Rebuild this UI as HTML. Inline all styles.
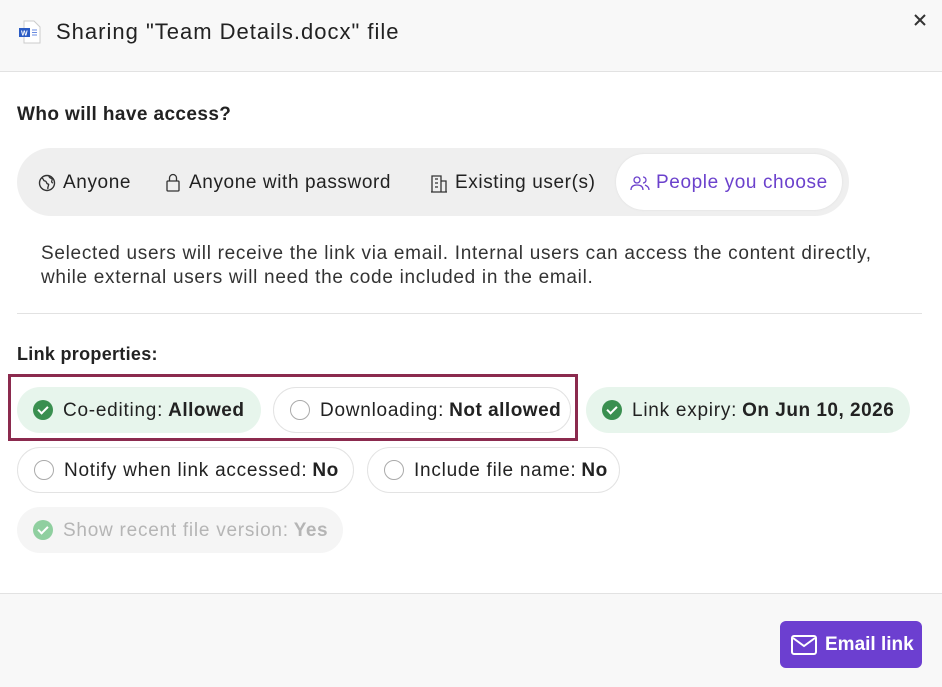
<!DOCTYPE html><html><head><style>
body{margin:0;width:942px;height:686px;font-family:"Liberation Sans",sans-serif;color:#222;background:#fff;position:relative;overflow:hidden}
.a{position:absolute}
.pill{position:absolute;height:46px;border-radius:24px;display:flex;align-items:center;font-size:19px;letter-spacing:0.75px;box-sizing:border-box;padding-left:16px;padding-top:2px;white-space:nowrap}
.pill b{margin-left:5px;letter-spacing:0.5px}
.c{width:20px;height:20px;border-radius:50%;box-sizing:border-box;margin-right:10px;flex:none;position:relative;margin-top:-2px}
.o{border:1.5px solid #aaa}
.ob{border:1px solid #e3e3e3;background:#fff}
.g{background:#e7f5ec}
.seg{display:flex;align-items:center;font-size:19px;letter-spacing:0.6px;white-space:nowrap}
.g .c::after,.dim .c::after{content:"";position:absolute;left:7px;top:4px;width:4px;height:8px;border:solid #fff;border-width:0 2px 2px 0;transform:rotate(45deg)}
</style></head><body>
<div class="a" style="left:0;top:0;width:942px;height:71px;background:#f8f8f8;border-bottom:1px solid #e2e2e2"></div>
<svg class="a" style="left:18px;top:20px" width="24" height="24" viewBox="0 0 24 24"><path d="M6 1h10l6 6v16H6z" fill="#fff" stroke="#ccc"/><rect x="1" y="8" width="11" height="9" fill="#2b5cc4"/><text x="3" y="15.5" font-size="7" fill="#fff" font-family="Liberation Sans" font-weight="bold">W</text><path d="M14 10h5M14 12.5h5M14 15h5" stroke="#6a8be0"/></svg>
<div class="a" style="left:56px;top:19px;font-size:22px;letter-spacing:1px;color:#222">Sharing "Team Details.docx" file</div>
<svg class="a" style="left:913px;top:13px" width="14" height="14" viewBox="0 0 14 14"><path d="M2 2l10 10M12 2L2 12" stroke="#333" stroke-width="2"/></svg>
<div class="a" style="left:17px;top:104px;font-size:19px;letter-spacing:0.4px;font-weight:bold">Who will have access?</div>
<div class="a" style="left:17px;top:148px;width:832px;height:68px;background:#efefef;border-radius:34px"></div>
<div class="a" style="left:616px;top:154px;width:226px;height:56px;background:#fff;border-radius:28px;box-shadow:0 0 2px #ddd"></div>
<div class="a seg" style="left:38px;top:172px"><svg width="18" height="18" viewBox="0 0 18 18" style="margin-right:7px"><circle cx="9" cy="9" r="7.5" fill="none" stroke="#333" stroke-width="1.4"/><path d="M4 4c2 1 1 3 3 3s1 3 3 3-1 3 0 5M11 2c0 2 2 2 3 3s-2 3 1 4" fill="none" stroke="#333" stroke-width="1.3"/></svg>Anyone</div>
<div class="a seg" style="left:165px;top:172px"><svg width="16" height="20" viewBox="0 0 16 20" style="margin-right:8px"><rect x="2" y="8" width="12" height="10" rx="1" fill="none" stroke="#333" stroke-width="1.3"/><path d="M4.5 8V5a3.5 3.5 0 0 1 7 0v3" fill="none" stroke="#333" stroke-width="1.3"/></svg>Anyone with password</div>
<div class="a seg" style="left:430px;top:172px"><svg width="18" height="20" viewBox="0 0 18 20" style="margin-right:7px"><path d="M2 19V3h9v16M11 8h5v11M1 19h16M5 6h3M5 10h3M5 14h3" fill="none" stroke="#333" stroke-width="1.3"/></svg>Existing user(s)</div>
<div class="a seg" style="left:630px;top:172px;color:#6b41cc"><svg width="20" height="18" viewBox="0 0 20 18" style="margin-right:6px"><circle cx="7" cy="6" r="3" fill="none" stroke="#6b41cc" stroke-width="1.3"/><path d="M1 16c0-4 3-5 6-5s6 1 6 5M13 3a3 3 0 0 1 0 6M15 11c2 1 4 2 4 5" fill="none" stroke="#6b41cc" stroke-width="1.3"/></svg>People you choose</div>
<div class="a" style="left:41px;top:242px;font-size:19px;letter-spacing:0.7px;line-height:24px;color:#333;width:900px;white-space:nowrap">Selected users will receive the link via email. Internal users can access the content directly,<br>while external users will need the code included in the email.</div>
<div class="a" style="left:17px;top:313px;width:905px;height:1px;background:#e2e2e2"></div>
<div class="a" style="left:17px;top:344px;font-size:18px;letter-spacing:0.3px;font-weight:bold">Link properties:</div>
<div class="a" style="left:8px;top:374px;width:570px;height:67px;border:3px solid #8b2a4e;box-sizing:border-box"></div>
<div class="pill g" style="left:17px;top:387px;width:244px"><span class="c" style="background:#3a8f50"></span>Co-editing:<b>Allowed</b></div>
<div class="pill ob" style="left:273px;top:387px;width:298px"><span class="c o"></span>Downloading:<b>Not allowed</b></div>
<div class="pill g" style="left:586px;top:387px;width:324px"><span class="c" style="background:#3a8f50"></span>Link expiry:<b>On Jun 10, 2026</b></div>
<div class="pill ob" style="left:17px;top:447px;width:337px"><span class="c o"></span>Notify when link accessed:<b>No</b></div>
<div class="pill ob" style="left:367px;top:447px;width:253px"><span class="c o"></span>Include file name:<b>No</b></div>
<div class="pill dim" style="left:17px;top:507px;width:326px;background:#f5f5f5;color:#b5b5b5"><span class="c" style="background:#8fcf9f"></span>Show recent file version:<b>Yes</b></div>
<div class="a" style="left:0;top:593px;width:942px;height:93px;background:#f8f8f8;border-top:1px solid #e2e2e2"></div>
<div class="a" style="left:780px;top:621px;width:142px;height:47px;background:#6c3fd0;border-radius:6px;color:#fff;font-size:19px;font-weight:bold;display:flex;align-items:center"><svg width="26" height="20" viewBox="0 0 26 20" style="margin:0 8px 0 11px"><rect x="1" y="1" width="24" height="18" rx="2" fill="none" stroke="#fff" stroke-width="2"/><path d="M2 3l11 8 11-8" fill="none" stroke="#fff" stroke-width="2"/></svg>Email link</div>
</body></html>
